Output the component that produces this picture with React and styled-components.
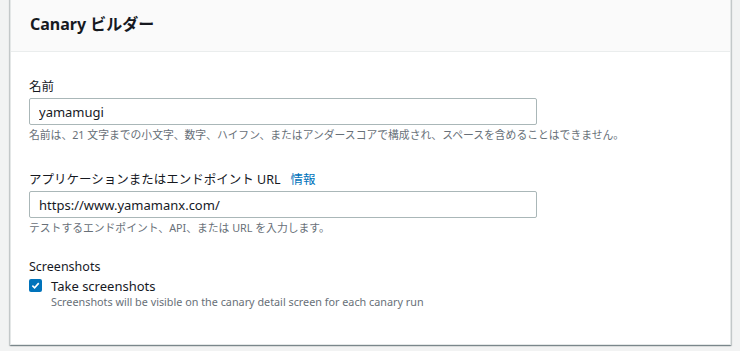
import React from "react"
import styled, { createGlobalStyle } from "styled-components"

const GlobalStyle = createGlobalStyle`
  html, body {
    margin: 0;
    padding: 0;
    background: #f2f3f3;
    font-family: "Noto Sans", "Noto Sans CJK JP", sans-serif;
    color: #16191f;
  }
`

const Page = styled.div`
  padding: 0 9px 0 10px;
  height: 351px;
  overflow: hidden;
`

const Card = styled.div`
  margin-top: -1px;
  background: #fff;
  border: 1px solid #e4e7e7;
  box-shadow: 0 1px 1px 0 rgba(0, 28, 36, 0.3),
    1px 1px 1px 0 rgba(0, 28, 36, 0.15), -1px 1px 1px 0 rgba(0, 28, 36, 0.15);
`

const Header = styled.div`
  height: 52px;
  display: flex;
  align-items: center;
  padding: 0 19px 3px;
  background: #fafafa;
  border-bottom: 1px solid #eaeded;
  box-sizing: border-box;
`

const Title = styled.h2`
  margin: 0;
  font-size: 16px;
  font-weight: 700;
  line-height: 20px;
`

const Body = styled.div`
  display: flex;
  flex-direction: column;
  padding: 26px 18px 34px;
`

const Field = styled.div`
  display: flex;
  flex-direction: column;
  margin-bottom: ${p => p.$gap || 0}px;
`

const Label = styled.label`
  font-size: 12.5px;
  line-height: 18px;
  margin-bottom: ${p => p.$mb ?? 2}px;
  display: flex;
  gap: 10px;
`

const InfoLink = styled.a`
  color: #0073bb;
  text-decoration: none;
`

const Input = styled.input`
  width: 508px;
  height: 27px;
  box-sizing: border-box;
  border: 1px solid #aab7b8;
  border-radius: 2px;
  padding: 0 9px;
  font-family: inherit;
  font-size: 13px;
  color: #16191f;
  outline: none;
`

const Hint = styled.div`
  font-size: 10.8px;
  line-height: 16px;
  margin-top: ${p => p.$mt ?? 2}px;
  color: #687078;
`

const CheckRow = styled.div`
  display: flex;
  gap: 9px;
  margin-top: 2px;
`

const Box = styled.span`
  flex: none;
  width: 13px;
  height: 13px;
  margin-top: 1px;
  border-radius: 2px;
  background: #0073bb;
  display: flex;
  align-items: center;
  justify-content: center;
`

const CheckText = styled.div`
  display: flex;
  flex-direction: column;
`

const CheckLabel = styled.span`
  font-size: 13px;
  line-height: 16px;
`

const TextField = ({ label, info, value, hint, gap }) => (
  <Field $gap={gap}>
    <Label>
      <span>{label}</span>
      {info && <InfoLink href="#">{info}</InfoLink>}
    </Label>
    <Input defaultValue={value} />
    <Hint>{hint}</Hint>
  </Field>
)

export default function App() {
  return (
    <Page>
      <GlobalStyle />
      <Card>
        <Header>
          <Title>Canary ビルダー</Title>
        </Header>
        <Body>
          <TextField
            gap={28}
            label="名前"
            value="yamamugi"
            hint="名前は、21 文字までの小文字、数字、ハイフン、またはアンダースコアで構成され、スペースを含めることはできません。"
          />
          <TextField
            gap={22}
            label="アプリケーションまたはエンドポイント URL"
            info="情報"
            value="https://www.yamamanx.com/"
            hint="テストするエンドポイント、API、または URL を入力します。"
          />
          <Field>
            <Label $mb={0}>Screenshots</Label>
            <CheckRow>
              <Box>
                <svg width="9" height="9" viewBox="0 0 10 10">
                  <path
                    d="M1.5 5.2 L4 7.6 L8.6 2.4"
                    fill="none"
                    stroke="#fff"
                    strokeWidth="1.8"
                  />
                </svg>
              </Box>
              <CheckText>
                <CheckLabel>Take screenshots</CheckLabel>
                <Hint $mt={0}>
                  Screenshots will be visible on the canary detail screen for
                  each canary run
                </Hint>
              </CheckText>
            </CheckRow>
          </Field>
        </Body>
      </Card>
    </Page>
  )
}
